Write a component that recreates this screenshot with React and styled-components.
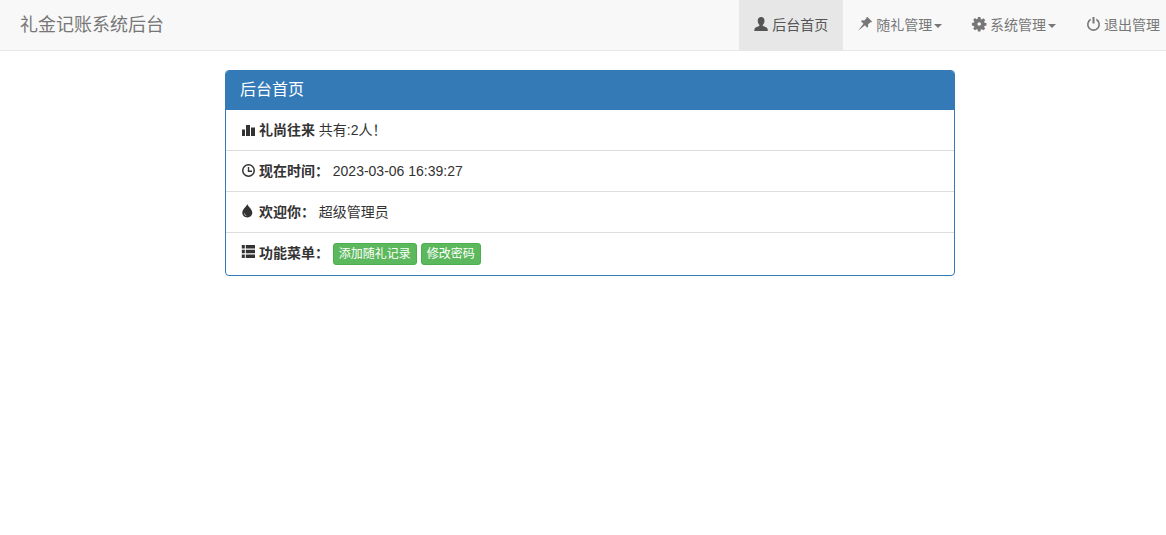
import React from "react";
import styled, { createGlobalStyle } from "styled-components";

const Global = createGlobalStyle`
  html, body { margin: 0; padding: 0; background: #fff; overflow: hidden; }
  body {
    font-family: "Liberation Sans", "Noto Sans CJK SC", sans-serif;
    font-size: 14px;
    line-height: 20px;
    color: #333;
  }
  * { box-sizing: border-box; }
`;

const Page = styled.div`
  width: 1166px;
  height: 535px;
  overflow: hidden;
`;

const Navbar = styled.nav`
  display: flex;
  justify-content: space-between;
  height: 51px;
  background: #f8f8f8;
  border-bottom: 1px solid #e7e7e7;
  padding-left: 20px;
  margin-bottom: 19px;
`;

const Brand = styled.a`
  font-size: 18px;
  line-height: 20px;
  padding: 15px 0;
  color: #777;
`;

const NavList = styled.ul`
  display: flex;
  list-style: none;
  margin: 0 -9px 0 0;
  padding: 0;
`;

const NavItem = styled.li`
  height: 50px;
  padding: 15px;
  white-space: nowrap;
  color: ${(p) => (p.$active ? "#555" : "#777")};
  background: ${(p) => (p.$active ? "#e7e7e7" : "transparent")};
`;

const Caret = styled.span`
  display: inline-block;
  width: 0;
  height: 0;
  margin-left: 2px;
  vertical-align: middle;
  border-top: 4px solid;
  border-right: 4px solid transparent;
  border-left: 4px solid transparent;
`;

const Glyph = styled.svg`
  display: inline-block;
  width: 14px;
  height: 14px;
  vertical-align: -1px;
  fill: currentColor;
  overflow: visible;
`;

const Panel = styled.section`
  width: 730px;
  margin-left: 225px;
  border: 1px solid #337ab7;
  border-radius: 4px;
  overflow: hidden;
`;

const PanelHeading = styled.h3`
  margin: 0;
  height: 39px;
  padding: 9px 14px;
  background: #337ab7;
  color: #fff;
  font-size: 16px;
  font-weight: 400;
  line-height: 20px;
`;

const Row = styled.div`
  padding: 10px 15px;
  border-top: 1px solid #ddd;
  height: 41px;
  white-space: nowrap;
  &:nth-of-type(1) {
    height: 40px;
    border-top: 0;
  }
  &:last-child {
    height: 43px;
  }
`;

const Strong = styled.b`
  font-weight: 700;
`;

const GreenButton = styled.a`
  display: inline-block;
  padding: 1px 5px;
  margin-right: 4px;
  font-size: 12px;
  line-height: 18px;
  color: #fff;
  background: #5cb85c;
  border: 1px solid #4cae4c;
  border-radius: 3px;
  vertical-align: middle;
`;

const UserIcon = () => (
  <Glyph viewBox="0 0 14 14">
    <path d="M.3 14c0-2.600.6-3.500 2.500-4.100 1.400-.5 2.500-.9 2.800-1.700C4.500 7.200 3.700 5.600 3.700 3.800 3.700 1.500 5.100 0 7.100 0s3.400 1.500 3.400 3.800c0 1.800-.8 3.400-1.900 4.400.3.800 1.400 1.200 2.800 1.700 1.900.6 2.400 1.500 2.400 4.100z" />
  </Glyph>
);

const PinIcon = () => (
  <Glyph viewBox="0 0 14 14">
    <path d="M9.500 0l4.500 4.500-.9.900-.7-.2-2.400 2.300.1 2.300-1 1L7 8.300 0 13.800 5.500 6.800 3.000 4.300l1-1 2.300.1L8.600 1.000 8.400 .3z" />
  </Glyph>
);

const CogIcon = () => (
  <Glyph viewBox="0 0 14 14">
    <path
      fillRule="evenodd"
      d="M6 0h2.400l.4 2 1 .4 1.700-1.100 1.700 1.700-1.100 1.700.4 1 2 .4v2.400l-2 .4-.4 1 1.100 1.700-1.700 1.700-1.700-1.100-1 .4-.4 2H6l-.4-2-1-.4-1.700 1.100-1.700-1.700 1.100-1.700-.4-1-2-.4V5.900l2-.4.4-1-1.100-1.700 1.700-1.700 1.700 1.100 1-.4zM7.200 5.200a1.800 1.800 0 100 3.600 1.800 1.800 0 000-3.600z"
    />
  </Glyph>
);

const PowerIcon = () => (
  <Glyph viewBox="0 0 14 14">
    <path d="M6.500 0h2v6.500h-2z" />
    <path d="M4.700 1.600a6.500 6.500 0 105.600 0v1.800a4.900 4.900 0 11-5.600 0z" />
  </Glyph>
);

const StatsIcon = () => (
  <Glyph viewBox="0 0 14 14">
    <path d="M1 7.500h3V14H1zM5 3h4v11H5zM10 5.500h4V14h-4z" />
  </Glyph>
);

const ClockIcon = () => (
  <Glyph viewBox="0 0 14 14">
    <path
      fillRule="evenodd"
      d="M7.500 1a6.500 6.500 0 110 13 6.500 6.500 0 010-13zm0 1.500a5 5 0 100 10 5 5 0 000-10zM6.800 4h1.400v3.500H11v1.400H6.800z"
    />
  </Glyph>
);

const TintIcon = () => (
  <Glyph viewBox="0 0 14 14">
    <path
      fillRule="evenodd"
      d="M6.300 0c.7 2.900 5 5 5 8.800 0 2.600-2.200 4.700-5 4.700s-5-2.100-5-4.700C1.300 5 5.600 2.900 6.300 0zM3.200 8.400c-.4 1.800.9 3.500 2.800 3.600-1.300-.7-2.300-1.900-2.800-3.600z"
    />
  </Glyph>
);

const ListIcon = () => (
  <Glyph viewBox="0 0 14 14">
    <path d="M.8 0h3v3.400h-3zM4.800 0H14v3.400H4.800zM.8 4.800h3v3.400h-3zM4.800 4.800H14v3.400H4.800zM.8 9.600h3V13h-3zM4.800 9.600H14V13H4.800z" />
  </Glyph>
);

const COLON = "\uFF1A";
const BANG = "\uFF01";

export default function App() {
  return (
    <Page>
      <Global />
      <Navbar>
        <Brand>礼金记账系统后台</Brand>
        <NavList>
          <NavItem $active><UserIcon /> 后台首页</NavItem>
          <NavItem><PinIcon /> 随礼管理<Caret /></NavItem>
          <NavItem><CogIcon /> 系统管理<Caret /></NavItem>
          <NavItem><PowerIcon /> 退出管理</NavItem>
        </NavList>
      </Navbar>
      <Panel>
        <PanelHeading>后台首页</PanelHeading>
        <div>
          <Row><StatsIcon /> <Strong>礼尚往来</Strong> 共有:2人{BANG}</Row>
          <Row><ClockIcon /> <Strong>现在时间{COLON}</Strong> 2023-03-06 16:39:27</Row>
          <Row><TintIcon /> <Strong>欢迎你{COLON}</Strong> 超级管理员</Row>
          <Row>
            <ListIcon /> <Strong>功能菜单{COLON}</Strong> <GreenButton>添加随礼记录</GreenButton><GreenButton>修改密码</GreenButton>
          </Row>
        </div>
      </Panel>
    </Page>
  );
}
